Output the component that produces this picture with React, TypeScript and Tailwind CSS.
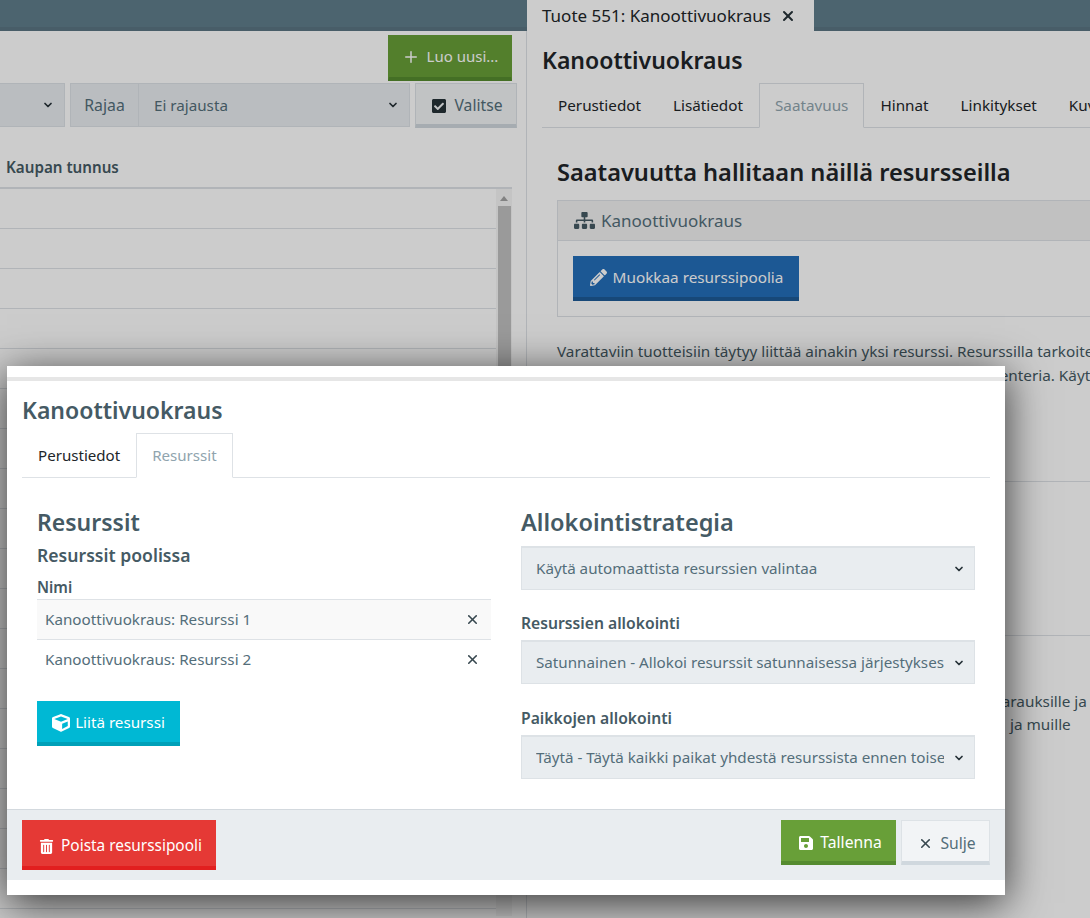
import React from "react";
import { FaSitemap, FaPencilAlt, FaCube, FaTrashAlt, FaSave, FaCheckSquare } from "react-icons/fa";
import { X, Plus, ChevronDown } from "lucide-react";

const Tab = ({ label, active }: { label: string; active?: boolean }) =>
  active ? (
    <div className="h-[45px] px-[15px] flex items-center border border-[#dee2e6] border-b-white -mb-px text-[#90a4ae] bg-white">{label}</div>
  ) : (
    <div className="h-[44px] px-4 flex items-center text-[#212529]">{label}</div>
  );

const Select = ({ label }: { label: string }) => (
  <div className="h-11 flex items-center bg-[#e9edf0] border-2 border-[#dde2e6] border-b border-x border-t-2 pl-[14px] pr-[9px] text-[#546e7a]">
    <span className="flex-1 overflow-hidden whitespace-nowrap min-w-0">{label}</span>
    <ChevronDown size={12} strokeWidth={3.5} className="ml-[9px] shrink-0 text-[#263238]" />
  </div>
);

export default function App() {
  return (
    <div className="relative h-[918px] w-[1090px] overflow-hidden bg-white text-[15.2px] text-[#455a64] font-['Noto_Sans',sans-serif]">
      <div className="h-[31px] bg-[#607d8b] border-b-4 border-[#5a7582] flex pl-[527px]">
        <div className="h-[31px] w-[287px] bg-white flex items-center pl-[15px] text-[17px] text-[#212529] gap-[9px]">
          <span>Tuote 551: Kanoottivuokraus</span>
          <X size={16} strokeWidth={3} className="text-[#263238]" />
        </div>
      </div>
      <div className="flex h-[887px]">
        <div className="w-[527px] shrink-0 border-r border-[#dee2e6]">
          <div className="flex justify-end pr-[14px] pt-[4px]">
            <div className="w-[124px] h-[46px] bg-[#689f38] border border-[#689f38] border-b-4 border-b-[#558b2f] text-white flex items-center justify-center gap-[7px]">
              <Plus size={18} strokeWidth={2} />
              <span className="text-[15px]">Luo uusi...</span>
            </div>
          </div>
          <div className="flex h-11 mt-[2px] pr-[9px] gap-[5px]">
            <div className="w-[65px] bg-[#e9edf0] border border-[#dde2e6] border-l-0 flex items-center justify-end pr-[10px] text-[#263238]">
              <ChevronDown size={12} strokeWidth={3.5} />
            </div>
            <div className="w-[340px] flex bg-[#e9edf0] border border-[#dde2e6]">
              <div className="w-[68px] pt-[2px] border-r border-[#dde2e6] flex items-center justify-center text-[15.8px] text-[#546e7a]">Rajaa</div>
              <div className="flex-1 flex items-center pl-[15px] pr-[10px] text-[#546e7a]">
                <span className="flex-1">Ei rajausta</span>
                <ChevronDown size={12} strokeWidth={3.5} className="text-[#263238]" />
              </div>
            </div>
            <div className="w-[102px] h-[45px] pt-[4px] pl-[2px] bg-[#f2f4f6] border border-[#dde2e6] border-b-4 border-b-[#d0d8de] flex items-center justify-center gap-[7px] text-[15.7px] text-[#546e7a]">
              <FaCheckSquare size={16} className="text-[#263238]" />
              <span>Valitse</span>
            </div>
          </div>
          <div className="h-[62px] pr-[14px] flex flex-col">
            <div className="flex-1 pl-[6px] flex items-center pt-[20px] font-semibold text-[#455a64]">Kaupan tunnus</div>
            <div className="h-[2px] bg-[#dee2e6]" />
          </div>
          <div className="flex mr-[14px] h-[727px]">
            <div className="flex-1">
              {Array.from({ length: 18 }).map((_, i) => (
                <div key={i} className="h-10 border-b border-[#dee2e6]" />
              ))}
            </div>
            <div className="w-4 bg-[#f5f5f5] flex flex-col items-center">
              <div className="h-[17px] w-full flex items-center justify-center pt-[2px]">
                <div className="w-0 h-0 border-x-[4px] border-x-transparent border-b-[5px] border-b-[#a3a3a3]" />
              </div>
              <div className="w-[13px] h-[560px] bg-[#c1c1c1]" />
            </div>
          </div>
        </div>
        <div className="flex-1 min-w-0 pl-[15px] overflow-hidden">
          <h1 className="text-[23px] font-semibold leading-none mt-[18px] h-[34px] text-[#212529]">Kanoottivuokraus</h1>
          <div className="flex border-b border-[#dee2e6] h-[45px] w-[600px] text-[15.25px]">
            <Tab label="Perustiedot" />
            <Tab label="Lisätiedot" />
            <Tab label="Saatavuus" active />
            <Tab label="Hinnat" />
            <Tab label="Linkitykset" />
            <Tab label="Kuvat" />
          </div>
          <div className="pl-[15px]">
            <h2 className="text-[23.6px] font-semibold text-[#212529] leading-none mt-[33px] h-[39px]">Saatavuutta hallitaan näillä resursseilla</h2>
            <div className="w-[700px] border border-[#dee2e6]">
              <div className="h-[40px] bg-[#f2f2f2] border-b border-[#dee2e6] flex items-center pl-4 gap-[6px] text-[17px] text-[#546e7a]">
                <FaSitemap size={21} className="text-[#455a64]" />
                <span>Kanoottivuokraus</span>
              </div>
              <div className="p-[15px]">
                <div className="w-[226px] h-[45px] pt-[2px] pl-[1px] bg-[#246eb9] border-b-4 border-[#1d5a96] text-white flex items-center justify-center gap-[6px] text-[15.3px]">
                  <FaPencilAlt size={17} />
                  <span>Muokkaa resurssipoolia</span>
                </div>
              </div>
            </div>
            <p className="mt-[22px] w-[700px] leading-[24px] whitespace-nowrap text-[15.3px] text-[#455a64]">Varattaviin tuotteisiin täytyy liittää ainakin yksi resurssi. Resurssilla tarkoitetaan</p>
            <p className="w-[700px] leading-[24px] whitespace-nowrap text-[15.3px] text-[#455a64] pl-[422px]">kalenteria. Käytä</p>
            <div className="w-[700px] h-px bg-[#dee2e6] mt-[94px]" />
            <div className="w-[700px] h-px bg-[#dee2e6] mt-[153px]" />
            <p className="mt-[54px] leading-[23px] whitespace-nowrap text-[15.3px] text-[#455a64] pl-[437px]">varauksille ja</p>
            <p className="leading-[23px] whitespace-nowrap text-[15.3px] text-[#455a64] pl-[453px]">ja muille</p>
          </div>
        </div>
      </div>

      <div className="absolute inset-0 bg-black/20">
        <div className="absolute left-[7px] top-[366px] w-[998px] h-[529px] bg-white shadow-[0_8px_40px_rgba(0,0,0,0.75)]">
          <div className="h-[15px] border-b-4 border-[#e6e6e6]" />
          <div className="px-[15px]">
            <h1 className="text-[23px] font-semibold text-[#455a64] leading-none mt-[18px] h-[34px]">Kanoottivuokraus</h1>
            <div className="flex border-b border-[#dee2e6] h-[45px] text-[15.1px]">
              <Tab label="Perustiedot" />
              <Tab label="Resurssit" active />
            </div>
            <div className="grid grid-cols-2 gap-[30px] px-[15px] pt-[29px]">
              <div>
                <h2 className="text-[23px] font-semibold leading-[30px] text-[#455a64]">Resurssit</h2>
                <h3 className="text-[17.6px] font-semibold leading-[24px] mt-[6px] text-[#455a64]">Resurssit poolissa</h3>
                <div className="font-semibold mt-[8px] leading-[24px] h-[24px] text-[#455a64]">Nimi</div>
                <div className="border-t border-[#dee2e6]">
                  <div className="h-10 px-2 bg-[#f9f9f9] border-b border-[#dee2e6] flex items-center justify-between">
                    <span className="text-[#546e7a]">Kanoottivuokraus: Resurssi 1</span>
                    <X size={15} strokeWidth={2.5} className="mr-[3px] text-[#37474f]" />
                  </div>
                  <div className="h-10 px-2 pb-[2px] flex items-center justify-between">
                    <span className="text-[#546e7a]">Kanoottivuokraus: Resurssi 2</span>
                    <X size={15} strokeWidth={2.5} className="mr-[3px] text-[#37474f]" />
                  </div>
                </div>
                <div className="mt-[21px] w-[143px] h-[45px] pt-[2px] bg-[#00b8d4] border-b-4 border-[#00a0b8] text-white flex items-center justify-center gap-[5px]">
                  <FaCube size={18} />
                  <span>Liitä resurssi</span>
                </div>
              </div>
              <div>
                <h2 className="text-[23.5px] font-semibold leading-[30px] text-[#455a64]">Allokointistrategia</h2>
                <div className="mt-[9px]"><Select label="Käytä automaattista resurssien valintaa" /></div>
                <div className="font-semibold text-[15.7px] mt-[21px] leading-[24px] h-[29px] text-[#455a64]">Resurssien allokointi</div>
                <Select label="Satunnainen - Allokoi resurssit satunnaisessa järjestyksessä" />
                <div className="font-semibold text-[15.7px] mt-[22px] leading-[24px] h-[29px] text-[#455a64]">Paikkojen allokointi</div>
                <Select label="Täytä - Täytä kaikki paikat yhdestä resurssista ennen toisen käyttöä" />
              </div>
            </div>
          </div>
          <div className="absolute left-0 right-0 top-[443px] h-[71px] bg-[#e9edf0] border-t border-[#d3d9de] px-[15px] pt-[10px] flex justify-between items-start text-[15.7px]">
            <div className="w-[194px] h-[50px] pt-[6px] pl-[3px] bg-[#e53935] border-b-4 border-[#e21f1f] text-white flex items-center justify-center gap-[7px] text-[15.4px]">
              <FaTrashAlt size={15} />
              <span>Poista resurssipooli</span>
            </div>
            <div className="flex gap-[5px]">
              <div className="w-[115px] h-[45px] pt-[5px] pl-[3px] bg-[#689f38] border-b-4 border-[#558b2f] text-white flex items-center justify-center gap-[6px]">
                <FaSave size={16} />
                <span>Tallenna</span>
              </div>
              <div className="w-[89px] h-[45px] pt-[5px] pl-[3px] bg-[#f2f4f6] border border-[#dde2e6] border-b-4 border-b-[#d0d8de] text-[#546e7a] flex items-center justify-center gap-[7px]">
                <X size={15} strokeWidth={2.5} className="text-[#37474f]" />
                <span>Sulje</span>
              </div>
            </div>
          </div>
        </div>
      </div>
    </div>
  );
}
